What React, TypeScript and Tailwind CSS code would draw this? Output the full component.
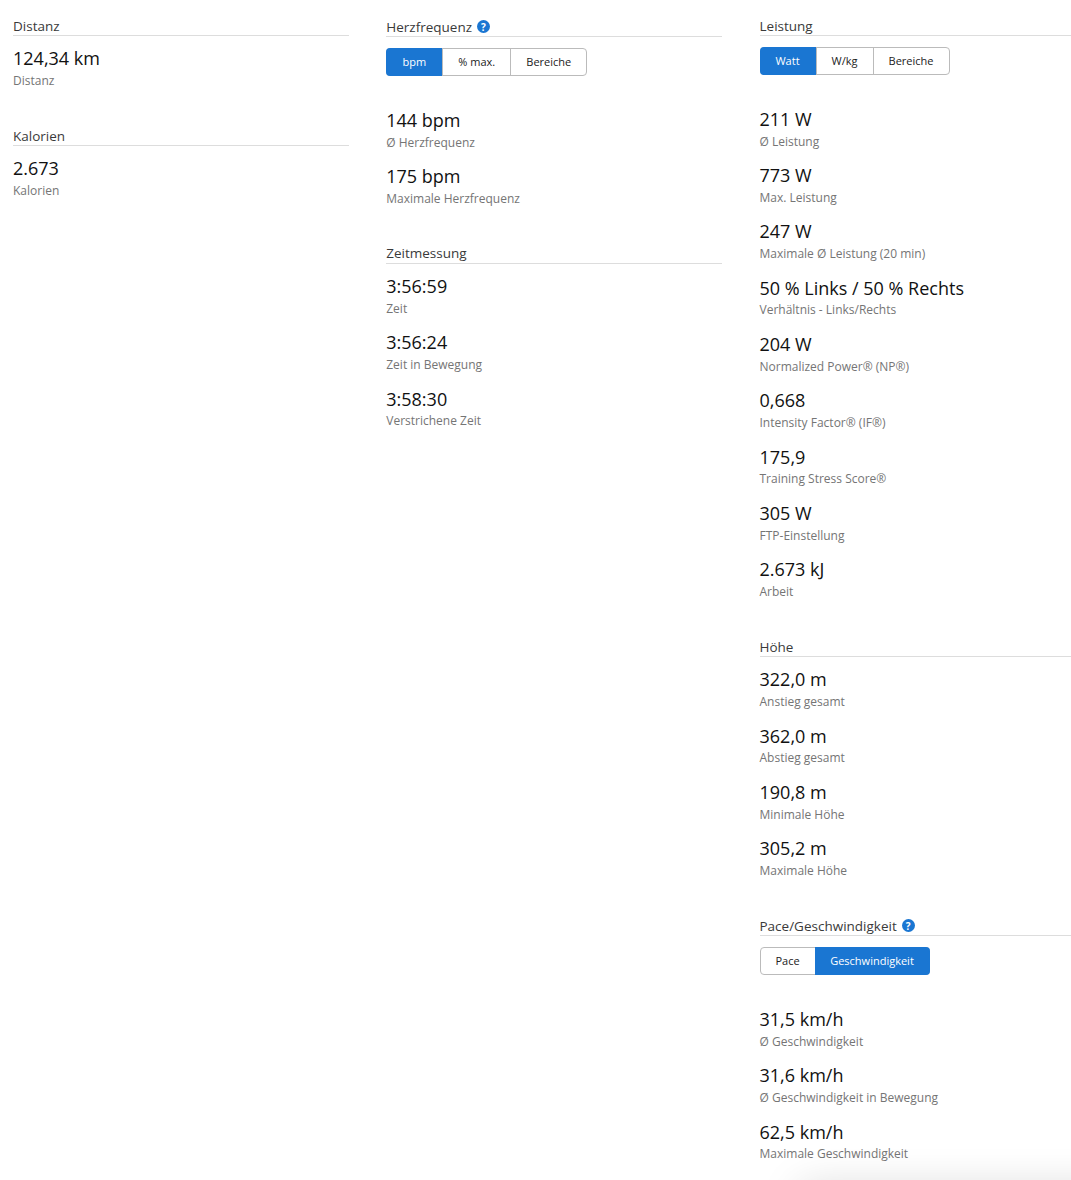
const font = { fontFamily: '"Open Sans", sans-serif' };

function Help() {
  return (
    <span className="ml-[5px] inline-flex h-[13px] w-[13px] items-center justify-center rounded-full bg-[#1a76d2] text-[10px] font-bold leading-none text-white">
      ?
    </span>
  );
}

function Heading({ title, help }: { title: string; help?: boolean }) {
  return (
    <div className="flex h-5 items-center border-b border-[#dddddd] text-[13.5px] leading-5 text-[#3a3a3a]">
      {title}
      {help && <Help />}
    </div>
  );
}

function Stat({ value, label }: { value: string; label: string }) {
  return (
    <div className="mb-[11.58px]">
      <div className="h-[26.75px] text-lg leading-[26px] text-[#111111]">{value}</div>
      <div className="h-[18px] text-xs leading-[18px] text-[#757575]">{label}</div>
    </div>
  );
}

function Tabs({ items, active }: { items: [string, number][]; active: number }) {
  return (
    <div className="mt-[11px] mb-[30.75px] flex h-7 w-fit rounded border border-[#bbbbbb] text-[11px] font-medium text-[#222222]">
      {items.map(([t, w], i) => (
        <div
          key={t}
          style={{ width: w }}
          className={
            i === active
              ? "-my-px flex h-7 items-center justify-center first:-ml-px first:rounded-l last:-mr-px last:rounded-r bg-[#1a76d2] text-white"
              : "flex items-center justify-center border-l border-[#bbbbbb] first:border-l-0"
          }
        >
          {t}
        </div>
      ))}
    </div>
  );
}

function Section({
  title,
  help,
  tabs,
  stats,
}: {
  title: string;
  help?: boolean;
  tabs?: { items: [string, number][]; active: number };
  stats: [string, string][];
}) {
  return (
    <section className="mb-9">
      <Heading title={title} help={help} />
      {tabs ? <Tabs items={tabs.items} active={tabs.active} /> : <div className="h-[9.25px]" />}
      {stats.map(([v, l]) => (
        <Stat key={l} value={v} label={l} />
      ))}
    </section>
  );
}

export default function App() {
  return (
    <div style={font} className="relative h-[1180px] w-[1071px] overflow-hidden bg-white">
      <div className="grid grid-cols-[336px_336px_336px] gap-x-[37.25px] pl-[13px] pt-4">
        <div>
          <Section title="Distanz" stats={[["124,34 km", "Distanz"]]} />
          <Section title="Kalorien" stats={[["2.673", "Kalorien"]]} />
        </div>
        <div className="pt-px">
          <Section
            title="Herzfrequenz"
            help
            tabs={{ items: [["bpm", 56], ["% max.", 68], ["Bereiche", 76]], active: 0 }}
            stats={[
              ["144 bpm", "Ø Herzfrequenz"],
              ["175 bpm", "Maximale Herzfrequenz"],
            ]}
          />
          <Section
            title="Zeitmessung"
            stats={[
              ["3:56:59", "Zeit"],
              ["3:56:24", "Zeit in Bewegung"],
              ["3:58:30", "Verstrichene Zeit"],
            ]}
          />
        </div>
        <div>
          <Section
            title="Leistung"
            tabs={{ items: [["Watt", 56], ["W/kg", 57], ["Bereiche", 76]], active: 0 }}
            stats={[
              ["211 W", "Ø Leistung"],
              ["773 W", "Max. Leistung"],
              ["247 W", "Maximale Ø Leistung (20 min)"],
              ["50 % Links / 50 % Rechts", "Verhältnis - Links/Rechts"],
              ["204 W", "Normalized Power® (NP®)"],
              ["0,668", "Intensity Factor® (IF®)"],
              ["175,9", "Training Stress Score®"],
              ["305 W", "FTP-Einstellung"],
              ["2.673 kJ", "Arbeit"],
            ]}
          />
          <Section
            title="Höhe"
            stats={[
              ["322,0 m", "Anstieg gesamt"],
              ["362,0 m", "Abstieg gesamt"],
              ["190,8 m", "Minimale Höhe"],
              ["305,2 m", "Maximale Höhe"],
            ]}
          />
          <Section
            title="Pace/Geschwindigkeit"
            help
            tabs={{ items: [["Pace", 54], ["Geschwindigkeit", 115]], active: 1 }}
            stats={[
              ["31,5 km/h", "Ø Geschwindigkeit"],
              ["31,6 km/h", "Ø Geschwindigkeit in Bewegung"],
              ["62,5 km/h", "Maximale Geschwindigkeit"],
            ]}
          />
        </div>
      </div>
      <div className="pointer-events-none absolute left-[800px] top-[1190px] h-5 w-[400px] shadow-[0_0_40px_rgba(0,0,0,0.22)]" />
    </div>
  );
}
